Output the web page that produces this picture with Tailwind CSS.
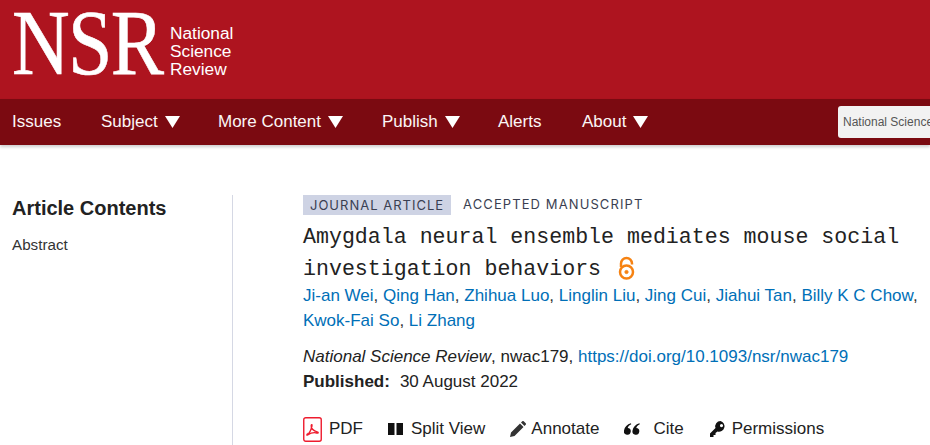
<!DOCTYPE html>
<html>
<head>
    <title>Amygdala neural ensemble mediates mouse social investigation behaviors</title>
    <script src="https://cdn.jsdelivr.net/npm/@tailwindcss/browser@4"></script>
</head>
<body class="bg-white h-[445px] w-[930px] overflow-hidden font-['Liberation_Sans',Arial,sans-serif]">
    <header class="h-[99px] bg-[#ae141f] flex items-start pl-[12px]">
        <div class="font-['Liberation_Serif',serif] text-white text-[94px] leading-[84px] tracking-[-2px] w-[158px] scale-x-[0.85] origin-left whitespace-nowrap [-webkit-text-stroke:0.6px_white]">NSR</div>
        <div class="text-white text-[17.3px] leading-[18px] mt-[24px] font-['Liberation_Sans',sans-serif]">
            <div>National</div>
            <div>Science</div>
            <div>Review</div>
        </div>
    </header>

    <nav class="h-[46px] bg-[#7b0a11] flex items-center pl-[12px] shadow-[0_2px_3px_rgba(0,0,0,0.2)] text-[#fbf6f6] text-[17px] overflow-hidden">
        <a class="w-[89px] shrink-0">Issues</a>
        <a class="w-[117px] shrink-0 flex items-center">Subject
            <svg class="ml-[7px]" width="15" height="12" viewBox="0 0 15 12"><path d="M0 0h15L7.5 12z" fill="#fff"/></svg>
        </a>
        <a class="w-[164px] shrink-0 flex items-center">More Content
            <svg class="ml-[7px]" width="15" height="12" viewBox="0 0 15 12"><path d="M0 0h15L7.5 12z" fill="#fff"/></svg>
        </a>
        <a class="w-[116px] shrink-0 flex items-center">Publish
            <svg class="ml-[7px]" width="15" height="12" viewBox="0 0 15 12"><path d="M0 0h15L7.5 12z" fill="#fff"/></svg>
        </a>
        <a class="w-[84px] shrink-0">Alerts</a>
        <a class="w-[256px] shrink-0 flex items-center">About
            <svg class="ml-[7px]" width="15" height="12" viewBox="0 0 15 12"><path d="M0 0h15L7.5 12z" fill="#fff"/></svg>
        </a>
        <div class="w-[92px] shrink-0 h-[32px] bg-[#f2f2f2] rounded-l-[3px] pl-[5px] text-[#555] text-[12px] leading-[32px] whitespace-nowrap overflow-hidden">National Science Review</div>
    </nav>

    <main class="flex pt-[50px]">
        <aside class="w-[233px] h-[250px] border-r border-[#d5d8e4] pl-[12px] shrink-0">
            <h2 class="text-[20px] leading-[26px] font-bold text-[#222]">Article Contents</h2>
            <a class="block mt-[14px] text-[15.2px] leading-[20px] text-[#333]">Abstract</a>
        </aside>

        <section class="pl-[70px] flex-1">
            <div class="flex items-center text-[13px] tracking-[1px] font-['Inter',sans-serif] text-[#3a3f52] h-[20px]">
                <span class="bg-[#ced3e4] px-[7px] h-[20px] leading-[20px]">JOURNAL ARTICLE</span>
                <span class="ml-[12px] tracking-[1.1px]">ACCEPTED MANUSCRIPT</span>
            </div>
            <h1 class="mt-[6px] font-['Liberation_Mono',monospace] text-[21.6px] h-[64px] leading-[32px] text-[#222] whitespace-nowrap">
                <div>Amygdala neural ensemble mediates mouse social</div>
                <div class="flex items-center h-[32px]">investigation behaviors
                    <svg class="ml-[17px] -mt-[2px]" width="17" height="25" viewBox="0 0 17 25" fill="none" stroke="#f68212" stroke-width="2.5"><circle cx="8.5" cy="16" r="6.5"/><circle cx="8.5" cy="16" r="1.6" fill="#f68212" stroke-width="1"/><path d="M3 11V7.500a5.500 5.500 0 0 1 11 0v1"/></svg>
                </div>
            </h1>
            <div class="text-[17px] leading-[25px] text-[#006fb7] -mt-[2px] whitespace-nowrap">
                Ji-an Wei<span class="text-[#333]">,</span> Qing Han<span class="text-[#333]">,</span> Zhihua Luo<span class="text-[#333]">,</span> Linglin Liu<span class="text-[#333]">,</span> Jing Cui<span class="text-[#333]">,</span> Jiahui Tan<span class="text-[#333]">,</span> Billy K C Chow<span class="text-[#333]">,</span><br>
                Kwok-Fai So<span class="text-[#333]">,</span> Li Zhang
            </div>
            <div class="mt-[11px] text-[17px] leading-[25px] text-[#222] whitespace-nowrap">
                <i>National Science Review</i>, nwac179, <a class="text-[#006fb7]">https://doi.org/10.1093/nsr/nwac179</a>
            </div>
            <div class="text-[17px] leading-[25px] text-[#222]">
                <b>Published:</b><span class="ml-[10px]">30 August 2022</span>
            </div>
            <div class="mt-[21px] flex items-center text-[17px] text-[#222] h-[28px] whitespace-nowrap">
                <svg width="19" height="25" viewBox="0 0 19 25" fill="none"><rect x="0.75" y="0.75" width="17.5" height="23.5" rx="2" fill="#fff" stroke="#ee1c2e" stroke-width="1.4"/><path d="M4 18c2-1 4-5 5-9 .3-1.500-.5-2-.8-.5-.3 2 1.500 5 6.500 6.500 1 .5.500 1.500-1 1-2-.5-6 0-9 2-.8.500-1-.1-.7-.5z" stroke="#ee1c2e" stroke-width="1.300"/></svg>
                <span class="ml-[7px] w-[33px]">PDF</span>
                <svg class="ml-[26px]" width="15" height="12" viewBox="0 0 15 12"><path d="M0 0h6.500v12H0zM8.500 0H15v12H8.500z" fill="#111"/></svg>
                <span class="ml-[8px]">Split View</span>
                <svg class="ml-[25px]" width="16" height="16" viewBox="0 0 16 16"><path d="M0 16l1-4.500L10 2.500l3.500 3.500L4.500 15zM11 1.500 12.300.300a1 1 0 0 1 1.400 0l2 2a1 1 0 0 1 0 1.400L14.500 5z" fill="#333"/></svg>
                <span class="ml-[5px]">Annotate</span>
                <svg class="ml-[25px]" width="16" height="12" viewBox="0 0 15 11"><path d="M6.500 0C3 1 .5 3.500 0 7a3.200 3.200 0 1 0 3.500-2.500C4 3 5 1.800 6.800 1zM14.500 0C11 1 8.500 3.500 8 7a3.200 3.200 0 1 0 3.500-2.500C12 3 13 1.800 14.800 1z" fill="#111"/></svg>
                <span class="ml-[13px]">Cite</span>
                <svg class="ml-[26px]" width="16" height="16" viewBox="0 0 16 16"><path d="M10.500 0a5.300 5.300 0 0 0-5 7L0 12.500V16h3.500v-2H5.500v-2l2-1.500A5.300 5.300 0 1 0 10.500 0zm1 3a1.500 1.500 0 1 1 0 3.200 1.500 1.500 0 0 1 0-3.200z" fill="#111"/></svg>
                <span class="ml-[6px]">Permissions</span>
            </div>
        </section>
    </main>
</body>
</html>
